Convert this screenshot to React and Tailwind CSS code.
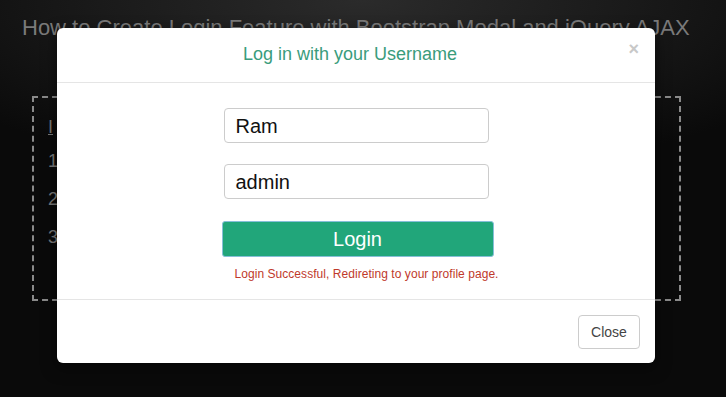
import React from 'react';

const App = () => {
  return (
    <div className="relative w-[726px] h-[397px] overflow-hidden bg-[#0a0a0a] bg-[radial-gradient(ellipse_70%_45%_at_50%_0%,#2b2b2b,#0a0a0a)] font-['Liberation_Sans',Arial,sans-serif]">
      {/* Page behind the modal */}
      <div className="pt-[14px] px-[22px]">
        <h1 className="text-[22px] leading-[28px] text-[#7a7a7a] whitespace-nowrap">
          How to Create Login Feature with Bootstrap Modal and jQuery AJAX
        </h1>
        <div className="mt-[54px] ml-[10px] w-[649px] h-[205px] border-2 border-dashed border-[#8a8a8a] pl-[14px] pt-[18px] text-[18px] text-[#7a7a7a]">
          <div className="underline leading-[22px]">I</div>
          <div className="mt-[12px] leading-[22px]">1</div>
          <div className="mt-[16px] leading-[22px]">2</div>
          <div className="mt-[16px] leading-[22px]">3</div>
        </div>
      </div>

      {/* Modal */}
      <div className="absolute left-[57px] top-[28px] w-[598px] h-[335px] bg-white rounded-[6px] shadow-[0_5px_15px_rgba(0,0,0,0.5)] flex flex-col">
        <div className="relative h-[55px] border-b border-[#e5e5e5] flex items-center justify-center pr-[12px]">
          <h4 className="text-[18px] text-[#3a9c7c] pb-[1px]">Log in with your Username</h4>
          <span className="absolute right-[16px] top-[12px] text-[18px] font-bold text-[#c8c8c8] leading-none">×</span>
        </div>
        <div className="flex-1 flex flex-col items-center pt-[25px]">
          <div className="w-[265px] h-[35px] border border-[#cccccc] rounded-[4px] flex items-center px-[11px] text-[20px] text-[#111]">Ram</div>
          <div className="mt-[21px] w-[265px] h-[35px] border border-[#cccccc] rounded-[4px] flex items-center px-[11px] text-[20px] text-[#111]">admin</div>
          <div className="mt-[22px] w-[272px] ml-[3px]">
            <div className="h-[36px] bg-[#21a67a] border border-[#86bfd8] rounded-[3px] flex items-center justify-center text-[20px] text-white">Login</div>
            <p className="mt-[8px] pl-[13px] text-[12px] tracking-[0.05px] text-[#c0392b] whitespace-nowrap">Login Successful, Redireting to your profile page.</p>
          </div>
        </div>
        <div className="h-[64px] border-t border-[#e5e5e5] flex items-start justify-end pt-[15px] pr-[15px]">
          <div className="w-[62px] h-[34px] border border-[#cccccc] rounded-[4px] flex items-center justify-center text-[14px] text-[#444]">Close</div>
        </div>
      </div>
    </div>
  );
};

export default App;
